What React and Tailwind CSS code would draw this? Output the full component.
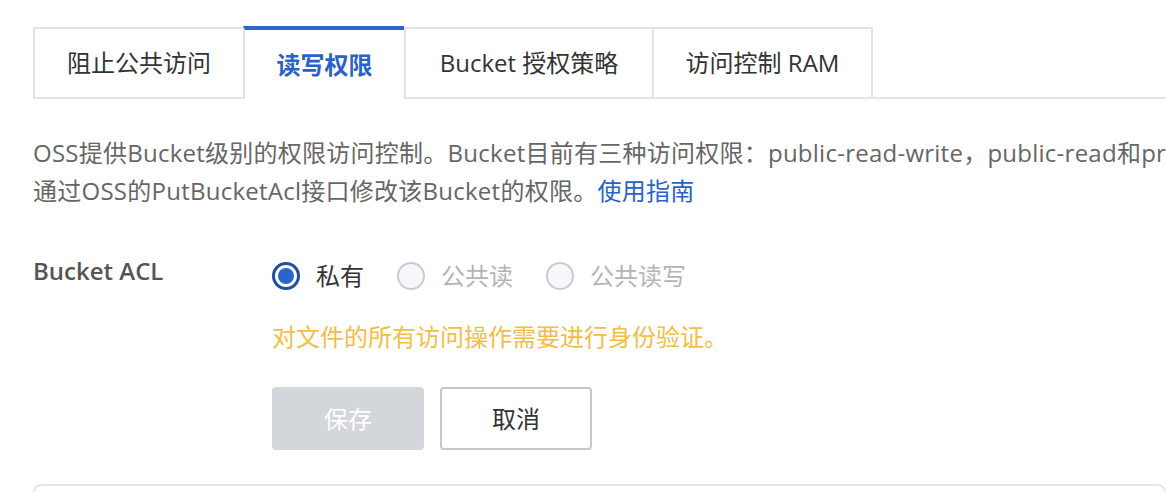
import { useState } from 'react';

const font = "font-['Open_Sans','Noto_Sans_CJK_SC',sans-serif]";

const tabs = [
    { label: '阻止公共访问', width: 'w-[210px]' },
    { label: '读写权限', width: 'w-[161px]' },
    { label: 'Bucket 授权策略', width: 'w-[248px]' },
    { label: '访问控制 RAM', width: 'w-[221px]' },
];

function Radio({ checked, label }) {
    return (
        <label className="flex items-center gap-[16px]">
            {checked ? (
                <span className="flex h-[28px] w-[28px] items-center justify-center rounded-full border-[3px] border-[#1f4f9e] bg-white">
                    <span className="h-[16px] w-[16px] rounded-full bg-[#2b65cc]" />
                </span>
            ) : (
                <span className="h-[28px] w-[28px] rounded-full border-2 border-[#c9ccd1] bg-[#f6f7f9]" />
            )}
            <span className={checked ? 'text-[#333]' : 'text-[#b4b4b4]'}>{label}</span>
        </label>
    );
}

export default function App() {
    const [active] = useState(1);

    return (
        <div className={`h-[492px] w-[1166px] overflow-hidden bg-white ${font}`}>
            {/* Tabs */}
            <div className="ml-[33px] mt-[26px] flex items-end border-b-2 border-[#e4e4e4]">
                {tabs.map((tab, i) =>
                    i === active ? (
                        <div
                            key={tab.label}
                            className={`${tab.width} -mb-[2px] flex h-[73px] items-center justify-center border-l-2 border-t-4 border-l-[#e4e4e4] border-t-[#2d64c8] bg-white text-[24px] font-semibold text-[#2a62c6]`}
                        >
                            {tab.label}
                        </div>
                    ) : (
                        <div
                            key={tab.label}
                            className={`${tab.width} flex h-[70px] items-center justify-center border-l-2 border-t-2 border-[#e4e4e4] text-[24px] text-[#333] ${i === tabs.length - 1 ? 'border-r-2' : ''}`}
                        >
                            {tab.label}
                        </div>
                    )
                )}
            </div>

            {/* Description */}
            <p className="ml-[33px] mt-[35px] whitespace-nowrap text-[24px] leading-[38px] tracking-[0.25px] text-[#666]">
                OSS提供Bucket级别的权限访问控制。Bucket目前有三种访问权限：public-read-write，public-read和private。您可以
                <br />
                通过OSS的PutBucketAcl接口修改该Bucket的权限。<a className="text-[#2a62c6]">使用指南</a>
            </p>

            {/* Form */}
            <div className="ml-[33px] mt-[48px] flex">
                <div className="w-[239px] text-[24px] font-semibold leading-[26px] text-[#555]">Bucket ACL</div>
                <div className="flex flex-col">
                    <div className="flex items-center gap-[33px] text-[24px]">
                        <Radio checked label="私有" />
                        <Radio label="公共读" />
                        <Radio label="公共读写" />
                    </div>
                    <div className="mt-[28px] text-[24px] leading-[30px] text-[#f2be45]">对文件的所有访问操作需要进行身份验证。</div>
                    <div className="mt-[35px] flex gap-[16px]">
                        <button className="h-[63px] w-[152px] rounded-[4px] bg-[#d3d6da] text-[24px] text-white">保存</button>
                        <button className="h-[63px] w-[152px] rounded-[4px] border-2 border-[#c5c8cd] bg-white text-[24px] text-[#333]">取消</button>
                    </div>
                </div>
            </div>

            {/* Next card */}
            <div className="ml-[33px] mt-[34px] h-[40px] rounded-t-[8px] border-2 border-[#e6e6e6]" />
        </div>
    );
}
